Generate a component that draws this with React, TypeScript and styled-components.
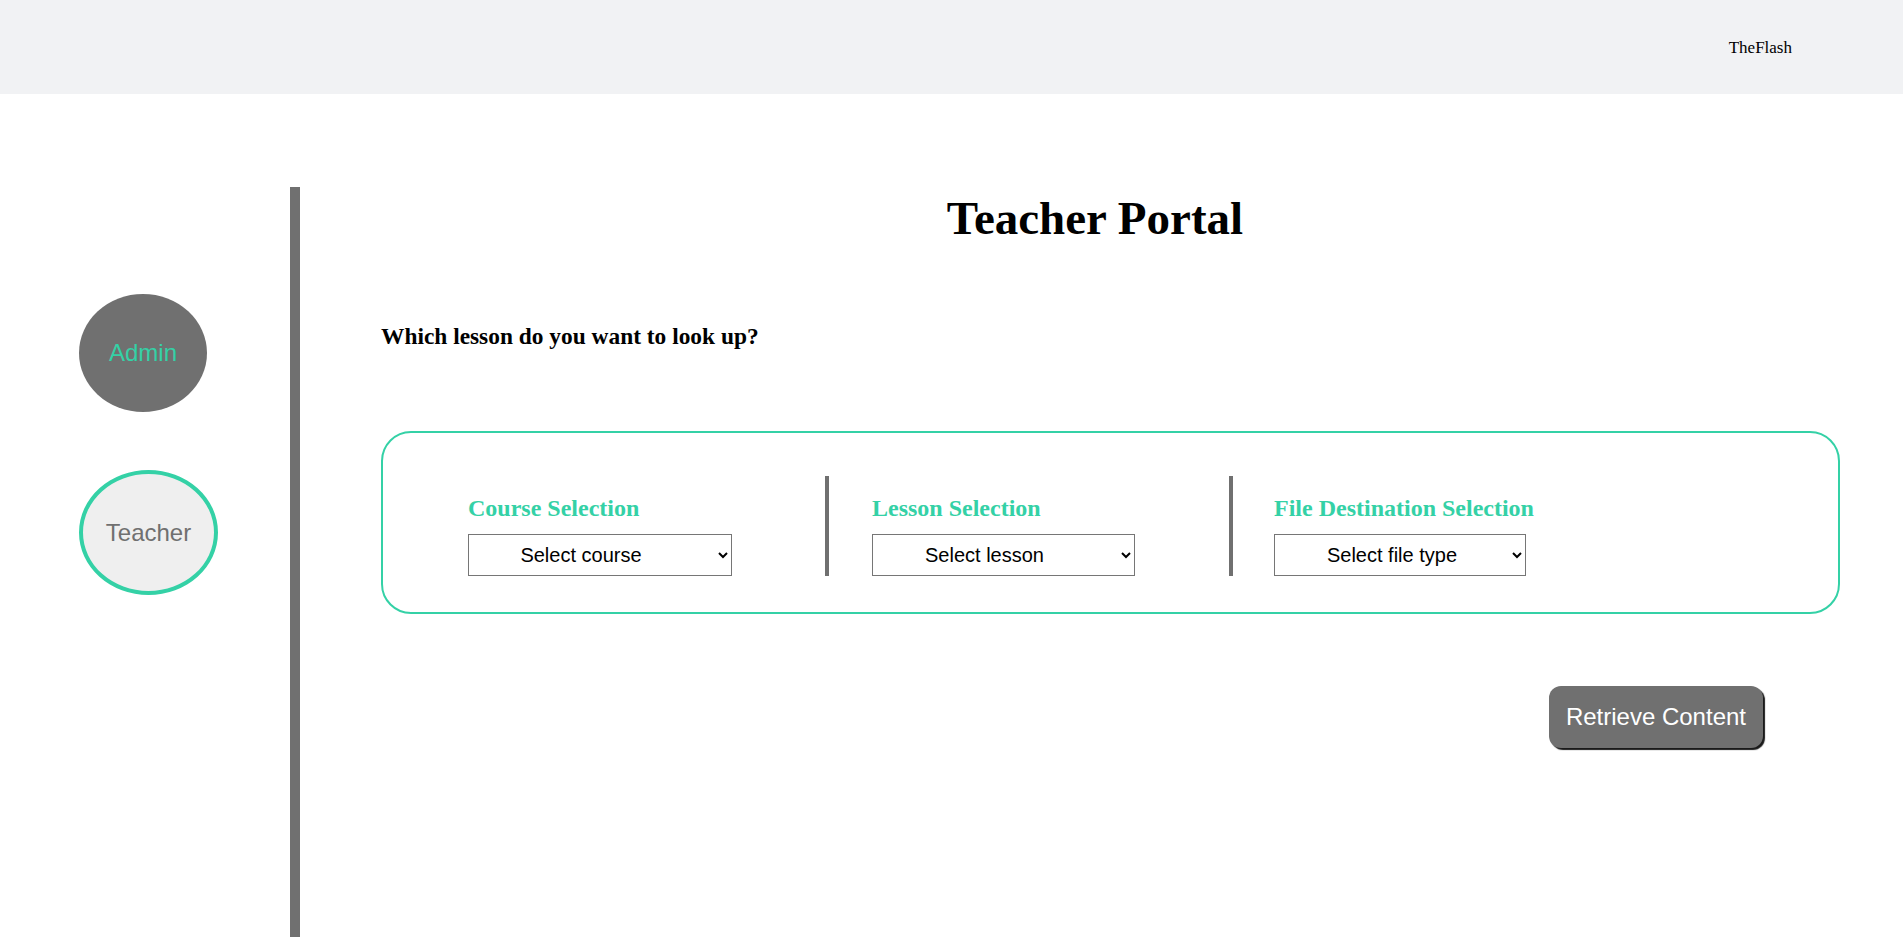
import React from "react";
import styled, { createGlobalStyle } from "styled-components";

const GREEN = "#34d1a6";
const GRAY = "#707070";

const Global = createGlobalStyle`
  html, body { margin: 0; padding: 0; background: #ffffff; }
  body { font-family: "Liberation Serif", "Times New Roman", serif; color: #000; }
  * { box-sizing: border-box; }
`;

const Header = styled.header`
  height: 94px;
  background: #f1f2f4;
  display: flex;
  align-items: center;
  justify-content: flex-end;
  padding-right: 111px;
`;

const UserName = styled.span`
  font-family: "Liberation Serif", serif;
  font-size: 17px;
  color: #000;
  margin-top: 1px;
`;

const Layout = styled.div`
  display: flex;
  padding-top: 93px;
`;

const Sidebar = styled.nav`
  width: 300px;
  flex-shrink: 0;
  min-height: calc(100vh - 187px);
  border-right: 10px solid ${GRAY};
  display: flex;
  flex-direction: column;
  align-items: flex-start;
  padding-left: 79px;
  padding-top: 107px;
  gap: 58px;
`;

const RoleCircle = styled.button<{ $active?: boolean; $w: number; $h: number }>`
  width: ${(p) => p.$w}px;
  height: ${(p) => p.$h}px;
  border-radius: 50%;
  display: flex;
  align-items: center;
  justify-content: center;
  font-family: "Liberation Sans", Arial, sans-serif;
  font-size: 24px;
  padding: 0;
  cursor: pointer;
  background: ${(p) => (p.$active ? "#efefef" : GRAY)};
  color: ${(p) => (p.$active ? GRAY : GREEN)};
  border: ${(p) => (p.$active ? `4px solid ${GREEN}` : "none")};
`;

const Main = styled.main`
  flex: 1;
  padding-top: 4px;
  padding-right: 13px;
  display: flex;
  flex-direction: column;
`;

const Title = styled.h1`
  margin: 0;
  text-align: center;
  font-size: 47px;
  font-weight: bold;
  line-height: normal;
`;

const Question = styled.h2`
  margin: 78px 0 0 81px;
  font-size: 23.4px;
  font-weight: bold;
  line-height: normal;
`;

const Card = styled.section`
  margin: 81px 50px 0 81px;
  border: 2px solid ${GREEN};
  border-radius: 30px;
  padding: 43px 0 36px 85px;
  display: flex;
`;

const Column = styled.div<{ $divider?: boolean; $pad?: number }>`
  width: ${(p) => (p.$divider ? 357 + 4 + (p.$pad ?? 0) : 357)}px;
  height: 100px;
  display: flex;
  flex-direction: column;
  justify-content: flex-end;
  gap: 12px;
  border-left: ${(p) => (p.$divider ? `4px solid ${GRAY}` : "none")};
  padding-left: ${(p) => p.$pad ?? 0}px;
`;

const Label = styled.label`
  font-family: "Liberation Serif", serif;
  font-size: 24px;
  font-weight: bold;
  color: ${GREEN};
  line-height: normal;
`;

const Select = styled.select<{ $w: number; $shift: number }>`
  width: ${(p) => p.$w}px;
  height: 42px;
  font-family: "Liberation Sans", Arial, sans-serif;
  font-size: 20px;
  text-align: center;
  color: #000;
  background: #fff;
  border: 1px solid #767676;
  border-radius: 0;
  padding: 0 ${(p) => p.$shift}px 0 0;
`;

const ButtonRow = styled.div`
  margin: 72px 127px 0 81px;
  display: flex;
  justify-content: flex-end;
`;

const RetrieveButton = styled.button`
  font-family: "Liberation Sans", Arial, sans-serif;
  font-size: 24px;
  color: #fff;
  background: ${GRAY};
  border: none;
  border-radius: 12px;
  padding: 17px 17px;
  line-height: 28px;
  box-shadow: 2px 2px 1px #1a1a1a;
  cursor: pointer;
`;

export default function App() {
  return (
    <>
      <Global />
      <Header>
        <UserName>TheFlash</UserName>
      </Header>
      <Layout>
        <Sidebar>
          <RoleCircle $w={128} $h={118}>Admin</RoleCircle>
          <RoleCircle $active $w={139} $h={125}>Teacher</RoleCircle>
        </Sidebar>
        <Main>
          <Title>Teacher Portal</Title>
          <Question>Which lesson do you want to look up?</Question>
          <Card>
            <Column>
              <Label>Course Selection</Label>
              <Select $w={264} $shift={26} defaultValue="">
                <option value="">Select course</option>
              </Select>
            </Column>
            <Column $divider $pad={43}>
              <Label>Lesson Selection</Label>
              <Select $w={263} $shift={26} defaultValue="">
                <option value="">Select lesson</option>
              </Select>
            </Column>
            <Column $divider $pad={41}>
              <Label>File Destination Selection</Label>
              <Select $w={252} $shift={4} defaultValue="">
                <option value="">Select file type</option>
              </Select>
            </Column>
          </Card>
          <ButtonRow>
            <RetrieveButton>Retrieve Content</RetrieveButton>
          </ButtonRow>
        </Main>
      </Layout>
    </>
  );
}
